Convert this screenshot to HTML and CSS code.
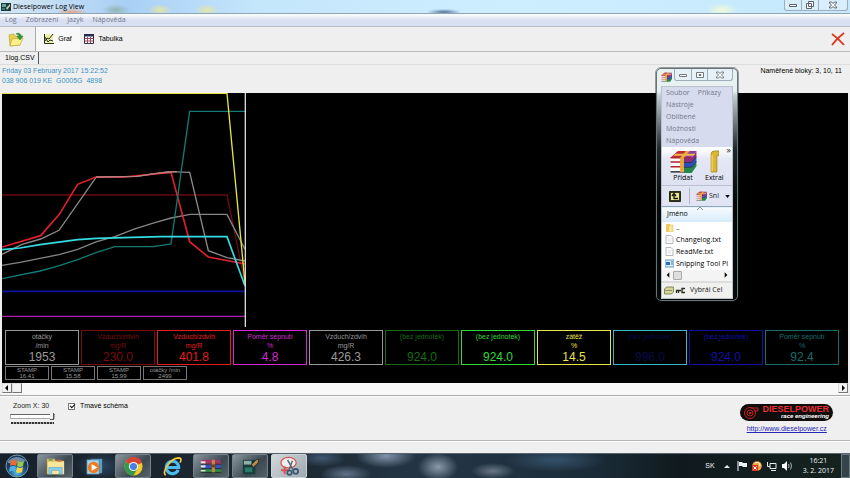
FILE: index.html
```html
<!DOCTYPE html>
<html lang="cs">
<head>
<meta charset="utf-8">
<title>Dieselpower Log View</title>
<link rel="stylesheet" href="styles.css">
</head>
<body>
<svg class="defs" aria-hidden="true">
  <symbol id="books" viewBox="0 0 28 24">
    <path d="M9 1h19l-5 7H1z" fill="#8e3fa0"/><path d="M9 1h8l-6 7H1z" fill="#c62a2c"/>
    <path d="M1 8h14v4H1zM1 13h14v4H1zM1 18h14v5H1z" fill="#fbfbfb"/>
    <path d="M1 8h22M1 12.500h15M1 17.500h15" stroke="#b3262c" stroke-width="1.500"/><path d="M1 22.800h15" stroke="#2a2a33" stroke-width="1.500"/>
    <path d="M15 8h8l5-7v6l-5 6h-8z" fill="#8d2f77"/><path d="M15 13h8l5-6v5l-5 6h-8z" fill="#2b4fc0"/><path d="M15 18h8l5-6v5l-5 7h-8z" fill="#23874a"/>
    <path d="M15 13h8l5-6M15 18h8l5-6" fill="none" stroke="#1b2140" stroke-width=".8"/>
    <path d="M17 1h4l-6 7v15h-4V8z" fill="#e6a63a"/><path d="M6 4h21l-2 2H4z" fill="#efb94f"/>
  </symbol>
</svg>

<header class="titlebar">
  <svg class="app-icon" viewBox="0 0 10 10"><path d="M0 1h10v8H0z" fill="#163b3a"/><path d="M1 2h4v3H1z" fill="#6aa59b"/><path d="M5 6l4-4v2L6 8z" fill="#c8d0b2"/><path d="M1 6h3v2H1z" fill="#3e7770"/></svg>
  <h1>Dieselpower Log View</h1>
  <div class="win-buttons">
    <button aria-label="Minimalizovat"><svg viewBox="0 0 10 8"><path d="M1.500 3.500h7v2h-7z" fill="#fff" stroke="#59636e"/></svg></button>
    <button aria-label="Obnovit"><svg viewBox="0 0 10 8"><path d="M3.500.5h5v5h-5zM1.500 2.500h5v5h-5z" fill="#fff" stroke="#59636e"/></svg></button>
    <button class="wide" aria-label="Zavřít"><svg viewBox="0 0 10 8"><path d="M1.500 1h2L5 2.500 6.500 1h2v1L6.500 4l2 2v1h-2L5 5.500 3.500 7h-2V6l2-2-2-2z" fill="#fff" stroke="#59636e"/></svg></button>
  </div>
</header>

<nav class="menubar">
  <button>Log</button><button>Zobrazení</button><button>Jazyk</button><button>Nápověda</button>
</nav>

<div class="toolbar">
  <button class="tool-open" aria-label="Otevřít"><svg viewBox="0 0 16 15"><path d="M1 3l5-1 1 2 5 1v8L2 14z" fill="#e6d14a" stroke="#b39c2a" stroke-width=".6"/><path d="M4 7l11-1-3 7-10 1z" fill="#fbf08a" stroke="#b7a22e" stroke-width=".6"/><path d="M8 2c3-2 5 0 5 2h2l-3 4-3-4h2c0-1-1-2-3-2z" fill="#2f9a39" stroke="#1c6a26" stroke-width=".5"/></svg></button>
  <button class="tool active"><svg viewBox="0 0 10 10"><path d="M0 0h9v9H0z" fill="#f1efa9"/><path d="M.5 0v9.500H10M1 7l2-3 2 1 4-5M1 3l3 5 2-2 3 1" fill="none" stroke="#26301f"/></svg>Graf</button>
  <button class="tool"><svg viewBox="0 0 10 10"><path d="M.5.5h9v9h-9z" fill="#fff" stroke="#3c2e47"/><path d="M0 0h10v2.500H0z" fill="#2b2950"/><path d="M1 4.500h8M1 7h8M3.500 3v6M6.500 3v6" stroke="#a04a5d"/></svg>Tabulka</button>
  <button class="tool-close" aria-label="Zavřít log"><svg viewBox="0 0 14 14"><path d="M1 2q6 4 12 11M13 1Q6 6 1 13" fill="none" stroke="#dc3a1c" stroke-width="1.900"/></svg></button>
</div>

<div class="tabs"><button>1log.CSV</button></div>

<main class="viewer">
  <div class="info">
    <p class="log-id">Friday 03 February 2017 15:22:52<br>038 906 019 KE &nbsp;G0005G &nbsp;4898</p>
    <p class="blocks">Naměřené bloky: 3, 10, 11</p>
  </div>
  <div class="screen">
    <svg class="chart" viewBox="6 9 732 702" role="img" aria-label="Graf">
      <g fill="none" stroke-width="4">
        <path d="M6 315H681L735 580" stroke="#6a0c10"/>
        <path d="M6 526L60 517L120 505L177 494L233 478L290 455L345 440L400 418L457 400L513 384L570 373H681L735 478" stroke="#858585"/>
        <path d="M6 493L66 463L122 447L177 421L288 262L410 259L505 245L569 247L625 482L681 503L735 513" stroke="#8a8a8a"/>
        <path d="M6 471L122 437L178 373L233 283L288 261H370L513 247L569 455L625 501L735 522" stroke="#e0202a" stroke-width="5"/>
        <path d="M288 261L410 259L470 250L530 245" stroke="#b98080"/>
        <path d="M6 566L120 543L178 527L233 509L290 487L345 470H460L513 462L569 64H735" stroke="#157a76"/>
        <path d="M6 479L60 474L120 464L233 449L290 445L480 440H681L735 588" stroke="#35dce4" stroke-width="5"/>
        <path d="M6 604H735" stroke="#1010a0" stroke-width="5"/>
        <path d="M6 679H735" stroke="#b01cb4" stroke-width="4"/>
        <path d="M6 10H681L735 580" stroke="#e4e63c"/>
        <path d="M736 9V711" stroke="#d8d8d8"/>
      </g>
    </svg>
    <ul class="gauges">
      <li class="g-gray"><span>otáčky<br>/min</span><b>1953</b></li>
      <li class="g-maroon"><span>Vzduch/zdvih<br>mg/R</span><b>230.0</b></li>
      <li class="g-red"><span>Vzduch/zdvih<br>mg/R</span><b>401.8</b></li>
      <li class="g-magenta"><span>Poměr sepnutí<br>%</span><b>4.8</b></li>
      <li class="g-gray"><span>Vzduch/zdvih<br>mg/R</span><b>426.3</b></li>
      <li class="g-green"><span>(bez jednotek)</span><b>924.0</b></li>
      <li class="g-lime"><span>(bez jednotek)</span><b>924.0</b></li>
      <li class="g-yellow"><span>zátěž<br>%</span><b>14.5</b></li>
      <li class="g-cyan"><span>(bez jednotek)</span><b>996.0</b></li>
      <li class="g-blue"><span>(bez jednotek)</span><b>924.0</b></li>
      <li class="g-teal"><span>Poměr sepnutí<br>%</span><b>92.4</b></li>
    </ul>
    <ul class="stamps">
      <li>STAMP<br>16.41</li><li>STAMP<br>15.58</li><li>STAMP<br>15.99</li><li>otáčky /min<br>2499</li>
    </ul>
  </div>
  <div class="scrollbar">
    <button aria-label="Vlevo"><svg viewBox="0 0 6 6"><path d="M4 0v6L1 3z"/></svg></button><i class="thumb"></i>
    <button class="end" aria-label="Vpravo"><svg viewBox="0 0 6 6"><path d="M2 0v6l3-3z"/></svg></button>
  </div>
</main>

<section class="settings">
  <div class="zoom">
    <label for="zoomx">Zoom X: 30</label>
    <input id="zoomx" type="range" min="1" max="30" value="30">
    <i class="ticks"></i>
  </div>
  <label class="scheme"><input type="checkbox" checked>Tmavé schéma</label>
  <div class="brand">
    <div class="logo">
      <svg viewBox="0 0 18 14"><g fill="none" stroke="#c22324"><circle cx="8" cy="7" r="5.500"/><circle cx="8" cy="7" r="3"/><path d="M9 2h7v3h-4"/></g><circle cx="8" cy="7" r="1.300" fill="#c22324"/></svg>
      <div><strong>DIESELPOWER</strong><em>race engineering</em></div>
    </div>
    <a href="http://www.dieselpower.cz">http://www.dieselpower.cz</a>
  </div>
</section>
<div class="statusbar"></div>

<footer class="taskbar">
  <button class="task start" aria-label="Start"><svg viewBox="0 0 24 24"><defs><radialGradient id="orb" cy=".8"><stop offset="0" stop-color="#4fc4e6"/><stop offset=".6" stop-color="#28679b"/><stop offset="1" stop-color="#19385d"/></radialGradient></defs><circle cx="12" cy="12" r="11" fill="url(#orb)" stroke="#7898ac"/><path d="M3 7q9-8 18 0-9 4-18 2z" fill="#c6dce8" opacity=".5"/><path d="M6 7q3-2 6 0l-1 5q-3-2-6 0z" fill="#ed6a32"/><path d="M13 7q3 2 6 0l-1 5q-3 2-6 0z" fill="#95c947"/><path d="M5 13q3-2 6 0l-1 5q-3-2-6 0z" fill="#52aee8"/><path d="M12 13q3 2 6 0l-1 5q-3 2-6 0z" fill="#fbd045"/></svg></button>
  <button class="task open" aria-label="Průzkumník"><svg viewBox="0 0 22 22"><path d="M2 3h8l1 2h9v14H2z" fill="#e1bd58"/><path d="M3 6h17v13H3z" fill="#f8e69b"/><path d="M4 3h4v2H4z" fill="#69a75a"/><path d="M13 4h4v2h-4z" fill="#d86b47"/><path d="M4 19v-7h14v7h-3v-4H7v4z" fill="#8ccce8" stroke="#4d9ec4" stroke-width=".6"/></svg></button>
  <button class="task" aria-label="Media Player"><svg viewBox="0 0 22 22"><path d="M7 3h12v15H7z" fill="#5c9ec4"/><path d="M3 4h13v15H3z" fill="#a9d1e7" stroke="#3b7598" stroke-width=".7"/><circle cx="10" cy="12" r="6" fill="#ee7b22"/><path d="M8 8.500l6 3.500-6 3.500z" fill="#fff"/></svg></button>
  <button class="task open" aria-label="Chrome"><svg viewBox="0 0 22 22"><circle cx="11" cy="11" r="9.500" fill="#f5c927"/><path d="M11 11L2.800 6.200A9.500 9.500 0 0 1 20 7z" fill="#d84432"/><path d="M11 11L2.800 6.200A9.500 9.500 0 0 0 11 20.500l4-7z" fill="#369a4d"/><circle cx="11" cy="11" r="4.800" fill="#fff"/><circle cx="11" cy="11" r="3.700" fill="#4780df"/></svg></button>
  <button class="task" aria-label="Internet Explorer"><svg viewBox="0 0 22 22"><path d="M17 14.500A6.500 6.500 0 1 1 17.500 12H6" fill="none" stroke="#4cbcf0" stroke-width="3.200"/><path d="M4 20C-1 18 8 3 17 2c4 0 3 3 2 5" fill="none" stroke="#f3cb3b" stroke-width="1.700"/></svg></button>
  <button class="task open" aria-label="WinRAR"><svg class="rar" viewBox="0 0 28 20"><path d="M3 2h22l2 4H1z" fill="#a8326e"/><path d="M1 6h26v2H1z" fill="#cf3a5c"/><path d="M1 8h26v5H1z" fill="#3153bd"/><path d="M1 14h26v4H1z" fill="#2f9447"/><path d="M1 4h6v3H1zM1 9h6v3H1zM1 15h6v2H1z" fill="#e8e2db"/><path d="M1 7.500h26M1 13.500h26M1 18h26" stroke="#161a22"/><path d="M15 2h4v16h-4z" fill="#bb8c3f"/><path d="M14 8h6v4h-6z" fill="#6e451c"/></svg></button>
  <button class="task open" aria-label="Dieselpower"><svg viewBox="0 0 22 22"><path d="M3 4h13v15H3z" fill="#193b3c"/><path d="M4 5h8v4H4z" fill="#8db0a4"/><path d="M5 12h8v5H5z" fill="#267b69"/><path d="M12 9l5-5 3-1-1 4-5 5z" fill="#b98a4d" stroke="#282d2a"/></svg></button>
  <button class="task open lit" aria-label="Výstřižky"><svg viewBox="0 0 22 22"><ellipse cx="10" cy="7" rx="8" ry="5.500" fill="#f3eeee" stroke="#d5534f" stroke-width="1.300"/><path d="M2 15h8M6 11v8" stroke="#d5534f" stroke-width="2"/><path d="M9 4l6 11M14 5l-4 11" stroke="#596c7c" stroke-width="1.600"/><g fill="none" stroke="#385776" stroke-width="1.800"><circle cx="11" cy="17.500" r="2.300"/><circle cx="17.500" cy="16" r="2.600"/></g></svg></button>
  <div class="tray">
    <span class="lang">SK</span>
    <svg viewBox="0 0 10 12"><path d="M2 8l3-3 3 3z" fill="#e7ecef"/></svg>
    <svg viewBox="0 0 10 12"><path d="M1 1v10" stroke="#fff"/><path d="M2 2h3l1 1h4v4H6L5 6H2z" fill="#eef1f2"/></svg>
    <svg viewBox="0 0 10 12"><circle cx="5" cy="6" r="4.800" fill="#f2a43a"/><path d="M3 3q5-2 5 3" fill="none" stroke="#fff"/><path d="M0 5h6v6H0z" fill="#d83b23"/><path d="M1.500 6.500l3 3M4.500 6.500l-3 3" stroke="#fff"/></svg>
    <svg viewBox="0 0 10 12"><path d="M3 3.500h6v5H3zM4 10.500h5M.5 2v4.500H3" fill="none" stroke="#e7ecef"/></svg>
    <svg viewBox="0 0 10 12"><path d="M0 4h2l3-3v10L2 8H0z" fill="#fff"/><path d="M6.500 4q1 2 0 4M8.500 2.500q2 3.500 0 7" fill="none" stroke="#d1dade" stroke-width=".8"/></svg>
    <time class="clock">16:21<br>3. 2. 2017</time>
    <button class="peek" aria-label="Plocha"></button>
  </div>
</footer>

<aside class="rar-window">
  <div class="rar-title">
    <svg class="rar-icon"><use href="#books"/></svg>
    <div class="win-buttons">
      <button aria-label="Minimalizovat"><svg viewBox="0 0 10 8"><path d="M1.500 3.500h7v2h-7z" fill="#fff" stroke="#737b80"/></svg></button>
      <button aria-label="Maximalizovat"><svg viewBox="0 0 10 8"><path d="M1.500 1.500h7v5h-7zM4 3.500h2v1H4z" fill="#fff" stroke="#737b80"/></svg></button>
      <button class="wide" aria-label="Zavřít"><svg viewBox="0 0 10 8"><path d="M1.500 1h2L5 2.500 6.500 1h2v1L6.500 4l2 2v1h-2L5 5.500 3.500 7h-2V6l2-2-2-2z" fill="#fff" stroke="#737b80"/></svg></button>
    </div>
  </div>
  <div class="rar-body">
    <nav class="rar-menu"><button>Soubor</button><button>Příkazy</button><button>Nástroje</button><button>Oblíbené</button><button>Možnosti</button><button>Nápověda</button></nav>
    <div class="rar-tools">
      <button><svg class="big"><use href="#books"/></svg>Přidat</button>
      <button class="extract"><svg viewBox="0 0 10 24"><path d="M2 4q0-3 4-3h4v5H8v17H2z" fill="#e0b52e" stroke="#94751b" stroke-width=".7"/><path d="M3 5v17" stroke="#f9e078"/></svg>Extral</button>
      <span class="more">»</span>
    </div>
    <div class="rar-path">
      <button aria-label="Nahoru"><svg viewBox="0 0 12 11"><path d="M.5.5h11v10H.5z" fill="#34361f" stroke="#292c18"/><path d="M2 2h8v7H2z" fill="#e9e792"/><path d="M5 8V3M3 5l2-2.500L7 5M5 7.500h4" fill="none" stroke="#15170c" stroke-width="1.300"/></svg></button>
      <div class="combo"><svg class="rar-icon"><use href="#books"/></svg><select aria-label="Složka"><option>Sni</option></select><svg class="drop" viewBox="0 0 6 4"><path d="M0 0h6L3 4z"/></svg></div>
    </div>
    <table class="files">
      <thead><tr><th>Jméno<svg viewBox="0 0 6 3"><path d="M0 3l3-3 3 3" fill="none" stroke="#83939e"/></svg></th></tr></thead>
      <tbody>
        <tr><td><svg viewBox="0 0 9 9"><path d="M1 1h4v8H1z" fill="#f0cd57"/><path d="M4 2h4v7H3z" fill="#f9e69a" stroke="#d8b64d" stroke-width=".5"/></svg>..</td></tr>
        <tr><td><svg viewBox="0 0 9 9"><path d="M1 .5h5l2 2v6H1z" fill="#fff" stroke="#929a9f" stroke-width=".7"/><path d="M2.500 4h4M2.500 6h4" stroke="#c2c8cb" stroke-width=".6"/></svg>Changelog.txt</td></tr>
        <tr><td><svg viewBox="0 0 9 9"><path d="M1 .5h5l2 2v6H1z" fill="#fff" stroke="#929a9f" stroke-width=".7"/><path d="M2.500 4h4M2.500 6h4" stroke="#c2c8cb" stroke-width=".6"/></svg>ReadMe.txt</td></tr>
        <tr><td><svg viewBox="0 0 9 9"><path d="M0 1h9v7H0z" fill="#d8ecfa" stroke="#5b9bc9"/><path d="M1 3h4v3H1z" fill="#296fb2"/><path d="M6 3h2M6 5h2" stroke="#49779b"/></svg>Snipping Tool Pl</td></tr>
      </tbody>
    </table>
    <div class="rar-scroll"><button aria-label="Vlevo"><svg viewBox="0 0 6 6"><path d="M4 1v4L2 3z"/></svg></button><i></i><button class="end" aria-label="Vpravo"><svg viewBox="0 0 6 6"><path d="M2 1v4l2-2z"/></svg></button></div>
    <div class="rar-status"><svg viewBox="0 0 22 9"><path d="M.5 3l2-2h7v5l-2 2h-7z" fill="#d6d797" stroke="#6f7250" stroke-width=".8"/><path d="M1 4.500h7" stroke="#6f7250" stroke-width=".7"/><path d="M12 4.500h5M12.500 4v3M14.500 4v3M21 2.500h-3v4h3" fill="none" stroke="#29291f" stroke-width="1.300"/></svg>Vybrái Cel</div>
  </div>
</aside>
</body>
</html>
```
FILE: styles.css
```css
* { box-sizing: border-box; }
html, body { height: 100%; }
body {
  margin: 0;
  display: flex;
  flex-direction: column;
  position: relative;
  overflow: hidden;
  background: #efefef;
  color: #222;
  font: 7px/10px "Liberation Sans", Arial, sans-serif;
}
button, input, select { margin: 0; padding: 0; border: 0; background: none; color: inherit; font: inherit; }
button { display: flex; align-items: center; justify-content: center; white-space: nowrap; }
svg { display: block; flex: none; }
ul, p, h1 { margin: 0; padding: 0; list-style: none; font-weight: normal; }
.defs { position: absolute; width: 0; height: 0; }

.titlebar {
  flex: none;
  height: 14px;
  display: flex;
  align-items: center;
  gap: 2px;
  padding-left: 1px;
  border-bottom: 1px solid #8ea3b3;
  background:
    radial-gradient(ellipse 16px 5px at 72px 13px, #e7a07c, transparent),
    radial-gradient(ellipse 14px 6px at 116px 10px, #91b5b0, transparent),
    radial-gradient(ellipse 12px 6px at 160px 10px, #e4e7a6, transparent),
    radial-gradient(ellipse 12px 6px at 207px 10px, #e4e7a6, transparent),
    radial-gradient(ellipse 17px 3px at 444px 12px, #4f7395, transparent),
    radial-gradient(ellipse 16px 7px at 722px 10px, #effbd8, transparent),
    linear-gradient(90deg, #d5e6f3, #a9cff5 15%, #c4e6fb 30%, #cdeeff 60%, #c5e8fc);
}
.titlebar h1 { font: 7px/12px "Open Sans", sans-serif; color: #000; }
.app-icon { width: 10px; height: 10px; }
.win-buttons {
  display: flex;
  align-self: flex-start;
  margin-left: auto;
  border: 1px solid #9aaebc;
  border-top: 0;
  border-radius: 0 0 3px 3px;
  background: #e4f2fa99;
}
.win-buttons button { width: 17px; height: 10px; border-right: 1px solid #9aaebc; }
.win-buttons .wide { width: 28px; border-right: 0; }
.win-buttons svg { width: 10px; height: 8px; }
.titlebar .win-buttons { margin-right: 2px; }

.menubar {
  flex: none;
  height: 13px;
  display: flex;
  gap: 9px;
  padding: 0 5px;
  color: #73788a;
  font: 7px/12px "Open Sans", sans-serif;
  background: linear-gradient(#fff, #d8dff0 50%, #d8dff0);
  border-bottom: 1px solid #b9bdc6;
}

.toolbar { flex: none; height: 25px; display: flex; border-bottom: 1px solid #b8b8b8; }
.toolbar button { gap: 4px; color: #000; }
.tool-open { width: 31px; }
.tool-open svg { width: 16px; height: 15px; }
.tool { width: 47px; }
.tool svg { width: 10px; height: 10px; }
.tool.active { width: 45px; margin-left: 4px; background: #f8f8f8; border-left: 1px solid #aaa; }
.tool-close { width: 25px; margin-left: auto; }
.tool-close svg { width: 14px; height: 14px; }

.tabs { flex: none; height: 13px; display: flex; border-bottom: 1px solid #ddd; }
.tabs button { height: 12px; padding: 0 3px 0 5px; border-right: 1px solid #555; color: #000; }

.viewer { flex: 1; min-height: 0; display: flex; flex-direction: column; padding: 0 2px; border-bottom: 1px solid #a9a9a9; }
.info { flex: none; height: 28px; display: flex; justify-content: space-between; padding-top: 1px; }
.log-id { color: #3a94c8; }
.blocks { padding-right: 6px; color: #000; }
.screen { flex: 1; min-height: 0; display: flex; flex-direction: column; padding: 0 9px 3px 3px; background: #000; }
.chart { width: 244px; height: 234px; margin-left: -3px; }
.gauges { display: grid; grid-template-columns: repeat(11, 1fr); gap: 2px; margin-top: 3px; }
.gauges li {
  height: 35px;
  display: flex;
  flex-direction: column;
  justify-content: space-between;
  align-items: center;
  padding-top: 1px;
  border: 1px solid currentColor;
  text-align: center;
}
.gauges span { line-height: 9px; white-space: nowrap; }
.gauges b { font: 12px/13px "Liberation Sans", Arial, sans-serif; }
.g-gray { color: #999; }
.g-maroon { color: #7a0c0e; }
.g-red { color: #e81c1c; }
.g-magenta { color: #d527d5; }
.g-green { color: #176b1b; }
.g-lime { color: #2fdb35; }
.g-yellow { color: #e7e34a; }
.gauges .g-cyan { color: #0a0a4c; border-color: #38b8c4; }
.g-blue { color: #1010a6; }
.g-teal { color: #166d6a; }
.stamps { display: flex; gap: 2px; margin-top: 1px; }
.stamps li { width: 44px; height: 14px; border: 1px solid #777; color: #999; text-align: center; font-size: 6px; line-height: 6px; white-space: nowrap; }

.scrollbar { flex: none; height: 12px; display: flex; align-items: flex-start; background: #f8f8f8; }
.scrollbar button, .thumb { width: 10px; height: 10px; background: #f1f1f1; border: 1px solid #ddd; border-right-color: #777; border-bottom-color: #777; }
.scrollbar svg { width: 6px; height: 6px; }
.end { margin-left: auto; }

.settings { flex: none; height: 45px; display: flex; padding: 4px 17px 0 10px; border-top: 1px solid #fff; border-bottom: 1px solid #b4b4b4; }
.zoom { width: 45px; display: flex; flex-direction: column; }
.zoom label { padding-left: 3px; white-space: nowrap; }
.zoom input { appearance: none; width: 45px; height: 5px; margin-top: 3px; border: 1px solid #aaa; border-top-color: #666; background: #fff; }
.zoom input::-webkit-slider-thumb { appearance: none; width: 4px; height: 7px; background: #f0f0f0; border-right: 1px solid #555; border-bottom: 1px solid #555; }
.ticks { height: 2px; margin: 3px 1px 0; background: repeating-linear-gradient(90deg, #333 0 2px, #aaa 2px 3px); }
.scheme { display: flex; align-items: center; align-self: flex-start; gap: 5px; margin-left: 13px; color: #000; }
.scheme input { appearance: none; width: 7px; height: 7px; border: 1px solid #777; background: #fff; position: relative; }
.scheme input:checked::after { content: ""; position: absolute; left: 1px; top: 0; width: 4px; height: 2px; border: solid #111; border-width: 0 0 1px 1px; transform: rotate(-45deg); }
.brand { margin-left: auto; display: flex; flex-direction: column; align-items: center; gap: 3px; padding-top: 3px; }
.brand a { color: #2525b8; }
.logo { display: flex; align-items: center; gap: 2px; height: 17px; padding: 0 4px 0 2px; border-radius: 9px; background: #110d0d; }
.logo svg { width: 18px; height: 14px; }
.logo div { display: flex; flex-direction: column; text-align: right; line-height: 7px; }
.logo strong { color: #e52e30; font-size: 9px; }
.logo em { color: #fff; font-weight: bold; font-size: 6px; }
.statusbar { flex: none; height: 12px; border-top: 1px solid #fff; }

.taskbar {
  flex: none;
  height: 25px;
  display: flex;
  gap: 3px;
  border-top: 1px solid #58636b;
  background:
    radial-gradient(ellipse 30px 12px at 386px 2px, #8093aa, transparent),
    radial-gradient(ellipse 20px 14px at 438px 13px, #8b9aaa, transparent),
    radial-gradient(ellipse 24px 9px at 322px 4px, #3f5872, transparent),
    radial-gradient(ellipse 26px 9px at 346px 20px, #5f7388, transparent),
    radial-gradient(ellipse 22px 8px at 493px 17px, #6a7785, transparent),
    radial-gradient(ellipse 50px 12px at 555px 6px, #34516b, transparent),
    radial-gradient(ellipse 24px 14px at 100px 12px, #2f4866, transparent),
    linear-gradient(90deg, #17212b, #1d2932 35%, #243646 50%, #1b2c38 70%, #101a1e 80%, #15231f);
}
.task { width: 36px; border-radius: 2px; }
.task.start { width: 34px; }
.task svg { width: 21px; height: 21px; }
.task.start svg { width: 24px; height: 24px; }
.task .rar { width: 22px; height: 18px; }
.task.open { border: 1px solid #76838c; background: linear-gradient(135deg, #8b969d, #3c4950 60%, #56636a); }
.task.lit { background: linear-gradient(135deg, #d2d8db, #9da8b0); border-color: #ccd4d8; }
.tray { margin-left: auto; display: flex; align-items: center; gap: 5px; color: #f0f3f4; }
.tray svg { width: 10px; height: 12px; }
.lang { padding-right: 2px; }
.clock { margin-left: 6px; text-align: center; font: 7px/10px "Open Sans", sans-serif; white-space: nowrap; }
.peek { width: 9px; height: 24px; margin-left: 2px; border: 1px solid #6d7a80; background: #35434a; }

.rar-window {
  position: absolute;
  right: 112px;
  top: 68px;
  width: 82px;
  padding: 0 4px 1px;
  border: 1px solid #697478;
  border-radius: 5px;
  outline: 1px solid #14191b66;
  background: linear-gradient(#e7f1f1 22px, #c1cccf 27px, #202629 80px, #070808 130px);
  font: 7px/12px "Open Sans", sans-serif;
}
.rar-title { height: 17px; display: flex; gap: 2px; }
.rar-title .rar-icon { margin-top: 3px; }
.rar-icon { width: 11px; height: 10px; }
.rar-title .win-buttons { flex: 1; margin-left: 0; }
.rar-title .win-buttons button { flex: 1 1 17px; width: auto; height: 11px; }
.rar-title .win-buttons .wide { flex-basis: 24px; }
.rar-body { overflow: hidden; border: 1px solid #b9c1cb; background: #eceef7; }
.rar-menu { display: flex; flex-wrap: wrap; column-gap: 8px; padding: 0 4px; color: #74798c; background: #d6dcee; }
.rar-tools { position: relative; display: flex; height: 39px; padding-left: 7px; gap: 8px; border-top: 1px solid #fff; border-bottom: 1px solid #bcc1d2; background: linear-gradient(#fff, #e4e8f5 30%, #dde1f1); }
.rar-tools button { flex-direction: column; justify-content: flex-start; color: #000; line-height: 10px; padding-top: 2px; }
.rar-tools .big { width: 28px; height: 23px; }
.extract svg { width: 10px; height: 23px; }
.more { position: absolute; right: 1px; top: -4px; font-size: 9px; }
.rar-path { display: flex; align-items: center; gap: 8px; height: 20px; padding-left: 7px; background: #e0e4f3; }
.rar-path button svg { width: 12px; height: 11px; }
.combo { flex: 1; min-width: 0; display: flex; align-items: center; gap: 2px; height: 16px; padding: 0 2px 0 6px; border-left: 1px solid #aeb4c5; }
.combo select { flex: 1; min-width: 0; appearance: none; }
.drop { width: 5px; height: 3px; }
.files { width: 100%; table-layout: fixed; border-collapse: collapse; background: #fff; color: #000; }
.files th { position: relative; height: 15px; padding: 0 5px; text-align: left; font-weight: normal; background: linear-gradient(#f6fbff, #d5eaf8); border-top: 1px solid #8fa6b8; }
.files th svg { position: absolute; left: 35px; top: 0; width: 6px; height: 3px; }
.files td { display: flex; align-items: center; gap: 2px; height: 12px; padding: 0 0 0 3px; white-space: nowrap; }
.files td svg { width: 9px; height: 9px; }
.rar-scroll { display: flex; align-items: center; gap: 1px; height: 11px; padding: 0 2px; background: #f4f4f4; }
.rar-scroll i { width: 9px; height: 9px; border: 1px solid #aaa; border-radius: 1px; background: #ddd; }
.rar-scroll svg { width: 8px; height: 8px; }
.rar-status { display: flex; align-items: center; gap: 4px; height: 17px; padding-left: 2px; border-top: 2px solid #ddd; background: #f0f0ee; white-space: nowrap; }
.rar-status svg { width: 22px; height: 9px; }
```
